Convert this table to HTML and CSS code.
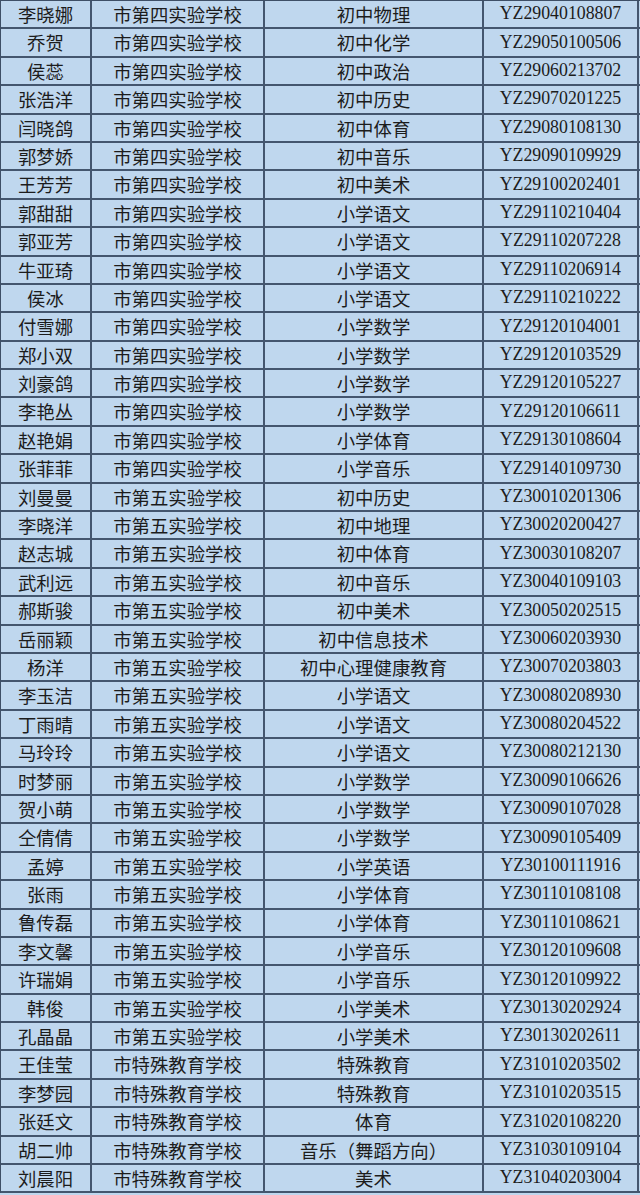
FILE: index.html
```html
<!DOCTYPE html>
<html lang="zh-CN">
<head>
<meta charset="utf-8">
<title>名单</title>
<link rel="stylesheet" href="styles.css">
</head>
<body>
<div class="sheet">
<div class="row"><div class="c name">李晓娜</div><div class="c school">市第四实验学校</div><div class="c subj">初中物理</div><div class="c code">YZ29040108807</div></div>
<div class="row"><div class="c name">乔贺</div><div class="c school">市第四实验学校</div><div class="c subj">初中化学</div><div class="c code">YZ29050100506</div></div>
<div class="row"><div class="c name">侯蕊</div><div class="c school">市第四实验学校</div><div class="c subj">初中政治</div><div class="c code">YZ29060213702</div></div>
<div class="row"><div class="c name">张浩洋</div><div class="c school">市第四实验学校</div><div class="c subj">初中历史</div><div class="c code">YZ29070201225</div></div>
<div class="row"><div class="c name">闫晓鸽</div><div class="c school">市第四实验学校</div><div class="c subj">初中体育</div><div class="c code">YZ29080108130</div></div>
<div class="row"><div class="c name">郭梦娇</div><div class="c school">市第四实验学校</div><div class="c subj">初中音乐</div><div class="c code">YZ29090109929</div></div>
<div class="row"><div class="c name">王芳芳</div><div class="c school">市第四实验学校</div><div class="c subj">初中美术</div><div class="c code">YZ29100202401</div></div>
<div class="row"><div class="c name">郭甜甜</div><div class="c school">市第四实验学校</div><div class="c subj">小学语文</div><div class="c code">YZ29110210404</div></div>
<div class="row"><div class="c name">郭亚芳</div><div class="c school">市第四实验学校</div><div class="c subj">小学语文</div><div class="c code">YZ29110207228</div></div>
<div class="row"><div class="c name">牛亚琦</div><div class="c school">市第四实验学校</div><div class="c subj">小学语文</div><div class="c code">YZ29110206914</div></div>
<div class="row"><div class="c name">侯冰</div><div class="c school">市第四实验学校</div><div class="c subj">小学语文</div><div class="c code">YZ29110210222</div></div>
<div class="row"><div class="c name">付雪娜</div><div class="c school">市第四实验学校</div><div class="c subj">小学数学</div><div class="c code">YZ29120104001</div></div>
<div class="row"><div class="c name">郑小双</div><div class="c school">市第四实验学校</div><div class="c subj">小学数学</div><div class="c code">YZ29120103529</div></div>
<div class="row"><div class="c name">刘豪鸽</div><div class="c school">市第四实验学校</div><div class="c subj">小学数学</div><div class="c code">YZ29120105227</div></div>
<div class="row"><div class="c name">李艳丛</div><div class="c school">市第四实验学校</div><div class="c subj">小学数学</div><div class="c code">YZ29120106611</div></div>
<div class="row"><div class="c name">赵艳娟</div><div class="c school">市第四实验学校</div><div class="c subj">小学体育</div><div class="c code">YZ29130108604</div></div>
<div class="row"><div class="c name">张菲菲</div><div class="c school">市第四实验学校</div><div class="c subj">小学音乐</div><div class="c code">YZ29140109730</div></div>
<div class="row"><div class="c name">刘曼曼</div><div class="c school">市第五实验学校</div><div class="c subj">初中历史</div><div class="c code">YZ30010201306</div></div>
<div class="row"><div class="c name">李晓洋</div><div class="c school">市第五实验学校</div><div class="c subj">初中地理</div><div class="c code">YZ30020200427</div></div>
<div class="row"><div class="c name">赵志城</div><div class="c school">市第五实验学校</div><div class="c subj">初中体育</div><div class="c code">YZ30030108207</div></div>
<div class="row"><div class="c name">武利远</div><div class="c school">市第五实验学校</div><div class="c subj">初中音乐</div><div class="c code">YZ30040109103</div></div>
<div class="row"><div class="c name">郝斯骏</div><div class="c school">市第五实验学校</div><div class="c subj">初中美术</div><div class="c code">YZ30050202515</div></div>
<div class="row"><div class="c name">岳丽颖</div><div class="c school">市第五实验学校</div><div class="c subj">初中信息技术</div><div class="c code">YZ30060203930</div></div>
<div class="row"><div class="c name">杨洋</div><div class="c school">市第五实验学校</div><div class="c subj">初中心理健康教育</div><div class="c code">YZ30070203803</div></div>
<div class="row"><div class="c name">李玉洁</div><div class="c school">市第五实验学校</div><div class="c subj">小学语文</div><div class="c code">YZ30080208930</div></div>
<div class="row"><div class="c name">丁雨晴</div><div class="c school">市第五实验学校</div><div class="c subj">小学语文</div><div class="c code">YZ30080204522</div></div>
<div class="row"><div class="c name">马玲玲</div><div class="c school">市第五实验学校</div><div class="c subj">小学语文</div><div class="c code">YZ30080212130</div></div>
<div class="row"><div class="c name">时梦丽</div><div class="c school">市第五实验学校</div><div class="c subj">小学数学</div><div class="c code">YZ30090106626</div></div>
<div class="row"><div class="c name">贺小萌</div><div class="c school">市第五实验学校</div><div class="c subj">小学数学</div><div class="c code">YZ30090107028</div></div>
<div class="row"><div class="c name">仝倩倩</div><div class="c school">市第五实验学校</div><div class="c subj">小学数学</div><div class="c code">YZ30090105409</div></div>
<div class="row"><div class="c name">孟婷</div><div class="c school">市第五实验学校</div><div class="c subj">小学英语</div><div class="c code">YZ30100111916</div></div>
<div class="row"><div class="c name">张雨</div><div class="c school">市第五实验学校</div><div class="c subj">小学体育</div><div class="c code">YZ30110108108</div></div>
<div class="row"><div class="c name">鲁传磊</div><div class="c school">市第五实验学校</div><div class="c subj">小学体育</div><div class="c code">YZ30110108621</div></div>
<div class="row"><div class="c name">李文馨</div><div class="c school">市第五实验学校</div><div class="c subj">小学音乐</div><div class="c code">YZ30120109608</div></div>
<div class="row"><div class="c name">许瑞娟</div><div class="c school">市第五实验学校</div><div class="c subj">小学音乐</div><div class="c code">YZ30120109922</div></div>
<div class="row"><div class="c name">韩俊</div><div class="c school">市第五实验学校</div><div class="c subj">小学美术</div><div class="c code">YZ30130202924</div></div>
<div class="row"><div class="c name">孔晶晶</div><div class="c school">市第五实验学校</div><div class="c subj">小学美术</div><div class="c code">YZ30130202611</div></div>
<div class="row"><div class="c name">王佳莹</div><div class="c school">市特殊教育学校</div><div class="c subj">特殊教育</div><div class="c code">YZ31010203502</div></div>
<div class="row"><div class="c name">李梦园</div><div class="c school">市特殊教育学校</div><div class="c subj">特殊教育</div><div class="c code">YZ31010203515</div></div>
<div class="row"><div class="c name">张廷文</div><div class="c school">市特殊教育学校</div><div class="c subj">体育</div><div class="c code">YZ31020108220</div></div>
<div class="row"><div class="c name">胡二帅</div><div class="c school">市特殊教育学校</div><div class="c subj">音乐（舞蹈方向）</div><div class="c code">YZ31030109104</div></div>
<div class="row"><div class="c name">刘晨阳</div><div class="c school">市特殊教育学校</div><div class="c subj">美术</div><div class="c code">YZ31040203004</div></div>
</div>
</body>
</html>
```

FILE: styles.css
```css
html, body {
  margin: 0;
  padding: 0;
  background: #bfd7ee;
}
.sheet {
  width: 640px;
  box-sizing: border-box;
  border-top: 1px solid #3e4f66;
  border-left: 1px solid #3e4f66;
  background: #bfd7ee;
}
.row {
  display: grid;
  grid-template-columns: 91px 173px 219px 155px;
  height: 28.4px;
  box-sizing: border-box;
  border-bottom: 2px solid #44566e;
}
.c {
  display: flex;
  align-items: center;
  justify-content: center;
  border-right: 2px solid #44566e;
  color: #1c1c1c;
  font-family: "Noto Sans CJK SC", sans-serif;
  font-size: 18.4px;
  line-height: 1;
  white-space: nowrap;
  overflow: hidden;
}
.code {
  font-family: "Liberation Serif", "Noto Sans CJK SC", serif;
  font-size: 17.8px;
}
```
